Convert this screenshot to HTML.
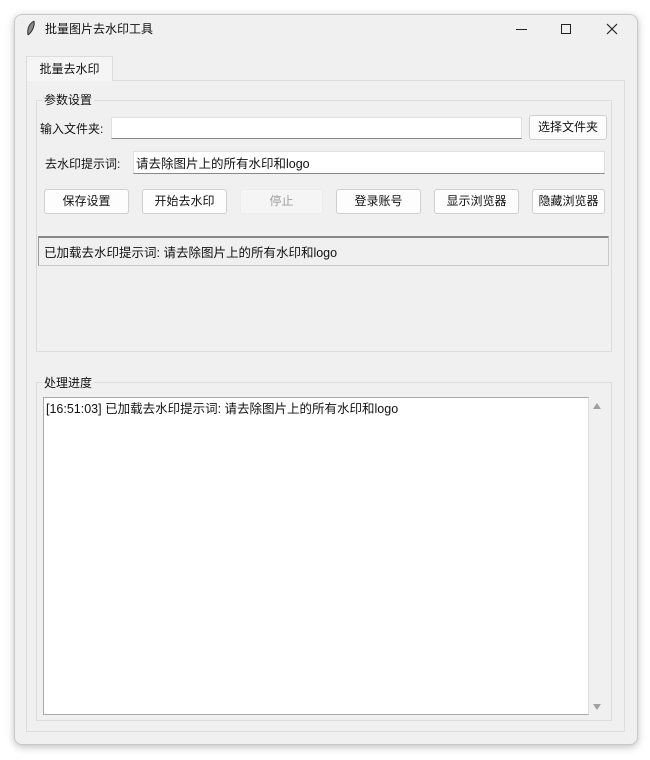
<!DOCTYPE html>
<html><head><meta charset="utf-8"><style>
*{box-sizing:border-box;margin:0;padding:0}
body{width:650px;height:760px;background:#fff;position:relative;overflow:hidden;font-family:"Liberation Sans","Noto Sans CJK SC",sans-serif;font-size:12px;color:#111}
.a{position:absolute}
.win{left:14px;top:14px;width:624px;height:731px;background:#f0f0f0;border:1px solid #c8c8c8;border-radius:8px;box-shadow:0 2px 8px rgba(0,0,0,.25)}
.btn{position:absolute;top:189px;height:25px;background:#fdfdfd;border:1px solid #cfcfcf;border-radius:3px;text-align:center;line-height:23px;font-size:12px}
.entry{position:absolute;background:#fff;border:1px solid #e0e0e0;border-bottom:1px solid #888}
.grp{position:absolute;border:1px solid #dcdcdc}
.lbl{position:absolute;background:#f0f0f0;padding:0 2px;font-size:12px}
</style></head><body>
<div class="a win"></div>
<svg class="a" style="left:25px;top:20px" width="12" height="16"><path d="M9 1 C4 4 2 9 3 15 M9 1 C10 6 7 12 3 15" stroke="#333" fill="#888" stroke-width="1"/></svg>
<div class="a" style="left:45px;top:20px;font-size:12px">批量图片去水印工具</div>
<div class="a" style="left:516px;top:29px;width:11px;height:1px;background:#222"></div>
<div class="a" style="left:561px;top:24px;width:10px;height:10px;border:1px solid #222"></div>
<svg class="a" style="left:606px;top:23px" width="12" height="12"><path d="M1 1L11 11M11 1L1 11" stroke="#222" stroke-width="1.2"/></svg>
<div class="a" style="left:26px;top:80px;width:599px;height:652px;border:1px solid #dcdcdc"></div>
<div class="a" style="left:26px;top:56px;width:87px;height:25px;background:#f5f5f5;border:1px solid #dcdcdc;border-bottom:none;text-align:center;line-height:24px">批量去水印</div>
<div class="grp" style="left:36px;top:100px;width:576px;height:252px"></div>
<div class="lbl" style="left:42px;top:91px">参数设置</div>
<div class="a" style="left:40px;top:120px">输入文件夹:</div>
<div class="entry" style="left:111px;top:117px;width:411px;height:22px"></div>
<div class="btn" style="left:529px;top:115px;width:78px">选择文件夹</div>
<div class="a" style="left:45px;top:155px">去水印提示词:</div>
<div class="entry" style="left:133px;top:151px;width:472px;height:23px;padding:1px 2px;font-size:12.5px">请去除图片上的所有水印和logo</div>
<div class="btn" style="left:44px;width:85px">保存设置</div>
<div class="btn" style="left:142px;width:85px">开始去水印</div>
<div class="btn" style="left:240px;width:83px;background:#f5f5f5;border-color:#ececec;color:#a0a0a0">停止</div>
<div class="btn" style="left:336px;width:85px">登录账号</div>
<div class="btn" style="left:434px;width:85px">显示浏览器</div>
<div class="btn" style="left:532px;width:73px">隐藏浏览器</div>
<div class="a" style="left:38px;top:236px;width:571px;height:30px;border:1px solid #c8c8c8;border-top:2px solid #888;border-left:1px solid #999;padding:4px 5px;font-size:12.5px">已加载去水印提示词: 请去除图片上的所有水印和logo</div>
<div class="grp" style="left:36px;top:382px;width:576px;height:339px"></div>
<div class="lbl" style="left:42px;top:374px">处理进度</div>
<div class="a" style="left:43px;top:397px;width:546px;height:318px;background:#fff;border:1px solid #aaa;border-right:1px solid #ddd;padding:0 2px;font-size:12.5px">[16:51:03] 已加载去水印提示词: 请去除图片上的所有水印和logo</div>
<div class="a" style="left:589px;top:397px;width:19px;height:318px;background:#f0f0f0"></div>
<svg class="a" style="left:592px;top:402px" width="10" height="8"><path d="M1 7L5 1L9 7Z" fill="#a0a0a0"/></svg>
<svg class="a" style="left:592px;top:703px" width="10" height="8"><path d="M1 1L5 7L9 1Z" fill="#a0a0a0"/></svg>
</body></html>
